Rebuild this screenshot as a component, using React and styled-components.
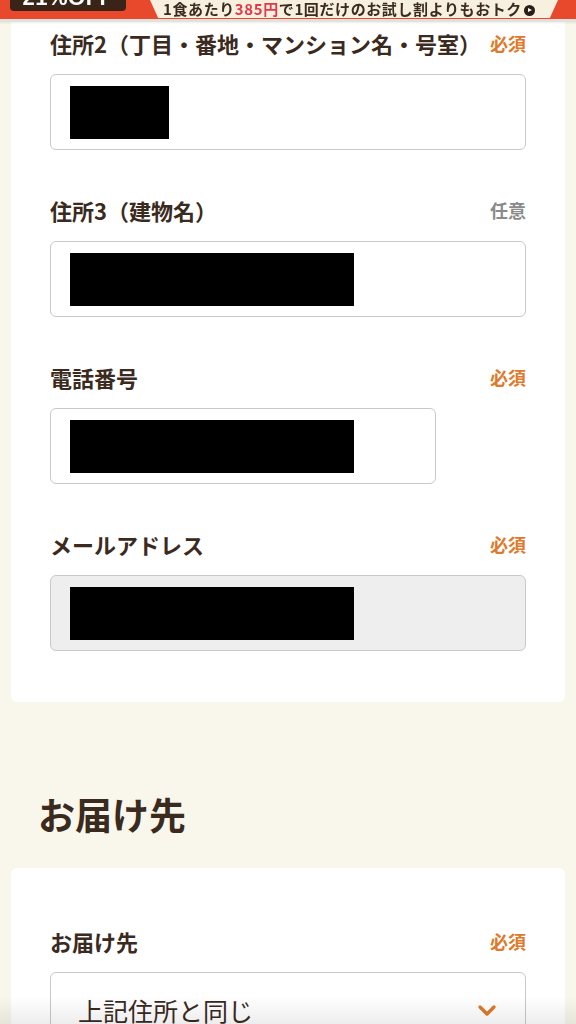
import React from "react";
import styled, { createGlobalStyle } from "styled-components";

const GlobalStyle = createGlobalStyle`
    html, body {
        margin: 0;
        padding: 0;
        background: #f9f6eb;
    }
    body {
        font-family: "Noto Sans CJK JP", "Noto Sans", sans-serif;
        color: #3b2a1e;
    }
    * { box-sizing: border-box; }
`

// Sticky campaign banner (partly scrolled out of view)

const Banner = styled.div`
    position: fixed;
    top: 0;
    left: 0;
    right: 0;
    height: 22px;
    background: #e8482c;
    border-bottom: 3px solid #e3e1db;
    box-shadow: 0 1px 2px rgba(0, 0, 0, 0.08);
    display: flex;
    align-items: flex-start;
    padding: 0 10px;
    overflow: hidden;
    z-index: 10;
`
const OffBox = styled.div`
    width: 116px;
    height: 11px;
    background: #3a2418;
    border-radius: 0 0 4px 4px;
    display: flex;
    justify-content: center;
    align-items: flex-end;
    overflow: hidden;
`
const OffText = styled.span`
    color: #fff;
    font-family: "Liberation Sans", sans-serif;
    font-weight: 700;
    font-size: 22px;
    line-height: 1;
    margin-bottom: 2px;
    letter-spacing: 0.5px;
`
const Promo = styled.div`
    margin-left: 24px;
    width: 408px;
    height: 18px;
    background: #f7f0df;
    clip-path: polygon(0 0, 100% 0, 98% 100%, 2% 100%);
    display: flex;
    align-items: flex-end;
    padding: 0 0 2px 13px;
    overflow: hidden;
`
const PromoText = styled.span`
    font-size: 15px;
    font-weight: 700;
    line-height: 1;
    letter-spacing: 0.6px;
    white-space: nowrap;
    color: #3a2a20;
`
const Price = styled.span`
    color: #e0394a;
`
const ArrowDot = styled.span`
    display: inline-block;
    width: 11px;
    height: 11px;
    border-radius: 50%;
    background: #2a1e16;
    margin-left: 2px;
    position: relative;
    &::after {
        content: "";
        position: absolute;
        left: 4px;
        top: 3px;
        border-left: 4px solid #fff;
        border-top: 2.5px solid transparent;
        border-bottom: 2.5px solid transparent;
    }
`

// Page

const Page = styled.div`
    padding: 0 11px 40px;
`
const Card = styled.div`
    background: #fff;
    border-radius: ${({ top }) => (top ? "0 0 6px 6px" : "6px")};
    padding: ${({ top }) => (top ? "28px 39px 51px" : "58px 39px 60px")};
    display: flex;
    flex-flow: column nowrap;
    gap: 45px;
`
const SectionTitle = styled.h2`
    margin: 88px 0 30px 27px;
    font-size: 37px;
    line-height: 48px;
    font-weight: 700;
    color: #3b2a1e;
`

// Field

const Field = styled.div`
    display: flex;
    flex-flow: column nowrap;
    gap: 16px;
`
const LabelRow = styled.div`
    display: flex;
    justify-content: space-between;
    align-items: center;
    height: 30px;
`
const Label = styled.span`
    font-size: 22px;
    font-weight: 700;
    color: #3b2a1e;
`
const Badge = styled.span`
    font-size: 18px;
    font-weight: 700;
    color: ${({ optional }) => (optional ? "#8a8a8a" : "#dd7a2c")};
`
const Input = styled.div`
    width: ${({ narrow }) => (narrow ? "386px" : "100%")};
    height: 76px;
    border: 1.5px solid #c9c9c9;
    border-radius: 6px;
    background: ${({ disabled }) => (disabled ? "#eeeeee" : "#fff")};
    padding: 10px 19px;
    display: flex;
    align-items: center;
`
const Redacted = styled.div`
    height: 53px;
    background: #000;
`
const Select = styled.div`
    width: 100%;
    height: 76px;
    border: 1.5px solid #c9c9c9;
    border-radius: 6px;
    background: #fff;
    padding: 0 28px 0 27px;
    display: flex;
    align-items: center;
    justify-content: space-between;
`
const SelectText = styled.span`
    font-size: 25px;
    font-weight: 400;
    color: #3b2a1e;
`
const BottomFade = styled.div`
    position: fixed;
    left: 0;
    right: 0;
    bottom: 0;
    height: 28px;
    background: linear-gradient(to bottom, rgba(0, 0, 0, 0), rgba(0, 0, 0, 0.07));
    pointer-events: none;
`

const fields = [
    { label: "住所2（丁目・番地・マンション名・号室）", required: true, width: 99 },
    { label: "住所3（建物名）", required: false, width: 284 },
    { label: "電話番号", required: true, width: 284, narrow: true },
    { label: "メールアドレス", required: true, width: 284, disabled: true },
]

function App() {
    return (
        <>
            <GlobalStyle />
            <Banner>
                <OffBox>
                    <OffText>21%OFF</OffText>
                </OffBox>
                <Promo>
                    <PromoText>
                        1食あたり<Price>385円</Price>で1回だけのお試し割よりもおトク
                    </PromoText>
                    <ArrowDot />
                </Promo>
            </Banner>
            <Page>
                <Card top>
                    {fields.map((f) => (
                        <Field key={f.label}>
                            <LabelRow>
                                <Label>{f.label}</Label>
                                <Badge optional={!f.required}>{f.required ? "必須" : "任意"}</Badge>
                            </LabelRow>
                            <Input narrow={f.narrow} disabled={f.disabled}>
                                <Redacted style={{ width: f.width }} />
                            </Input>
                        </Field>
                    ))}
                </Card>
                <SectionTitle>お届け先</SectionTitle>
                <Card>
                    <Field>
                        <LabelRow>
                            <Label>お届け先</Label>
                            <Badge>必須</Badge>
                        </LabelRow>
                        <Select>
                            <SelectText>上記住所と同じ</SelectText>
                            <svg width="20" height="13" viewBox="0 0 20 13">
                                <path d="M3 3 L10 10 L17 3" fill="none" stroke="#dd7a2c" strokeWidth="3.4" strokeLinecap="round" strokeLinejoin="round" />
                            </svg>
                        </Select>
                    </Field>
                </Card>
            </Page>
            <BottomFade />
        </>
    )
}

export default App
